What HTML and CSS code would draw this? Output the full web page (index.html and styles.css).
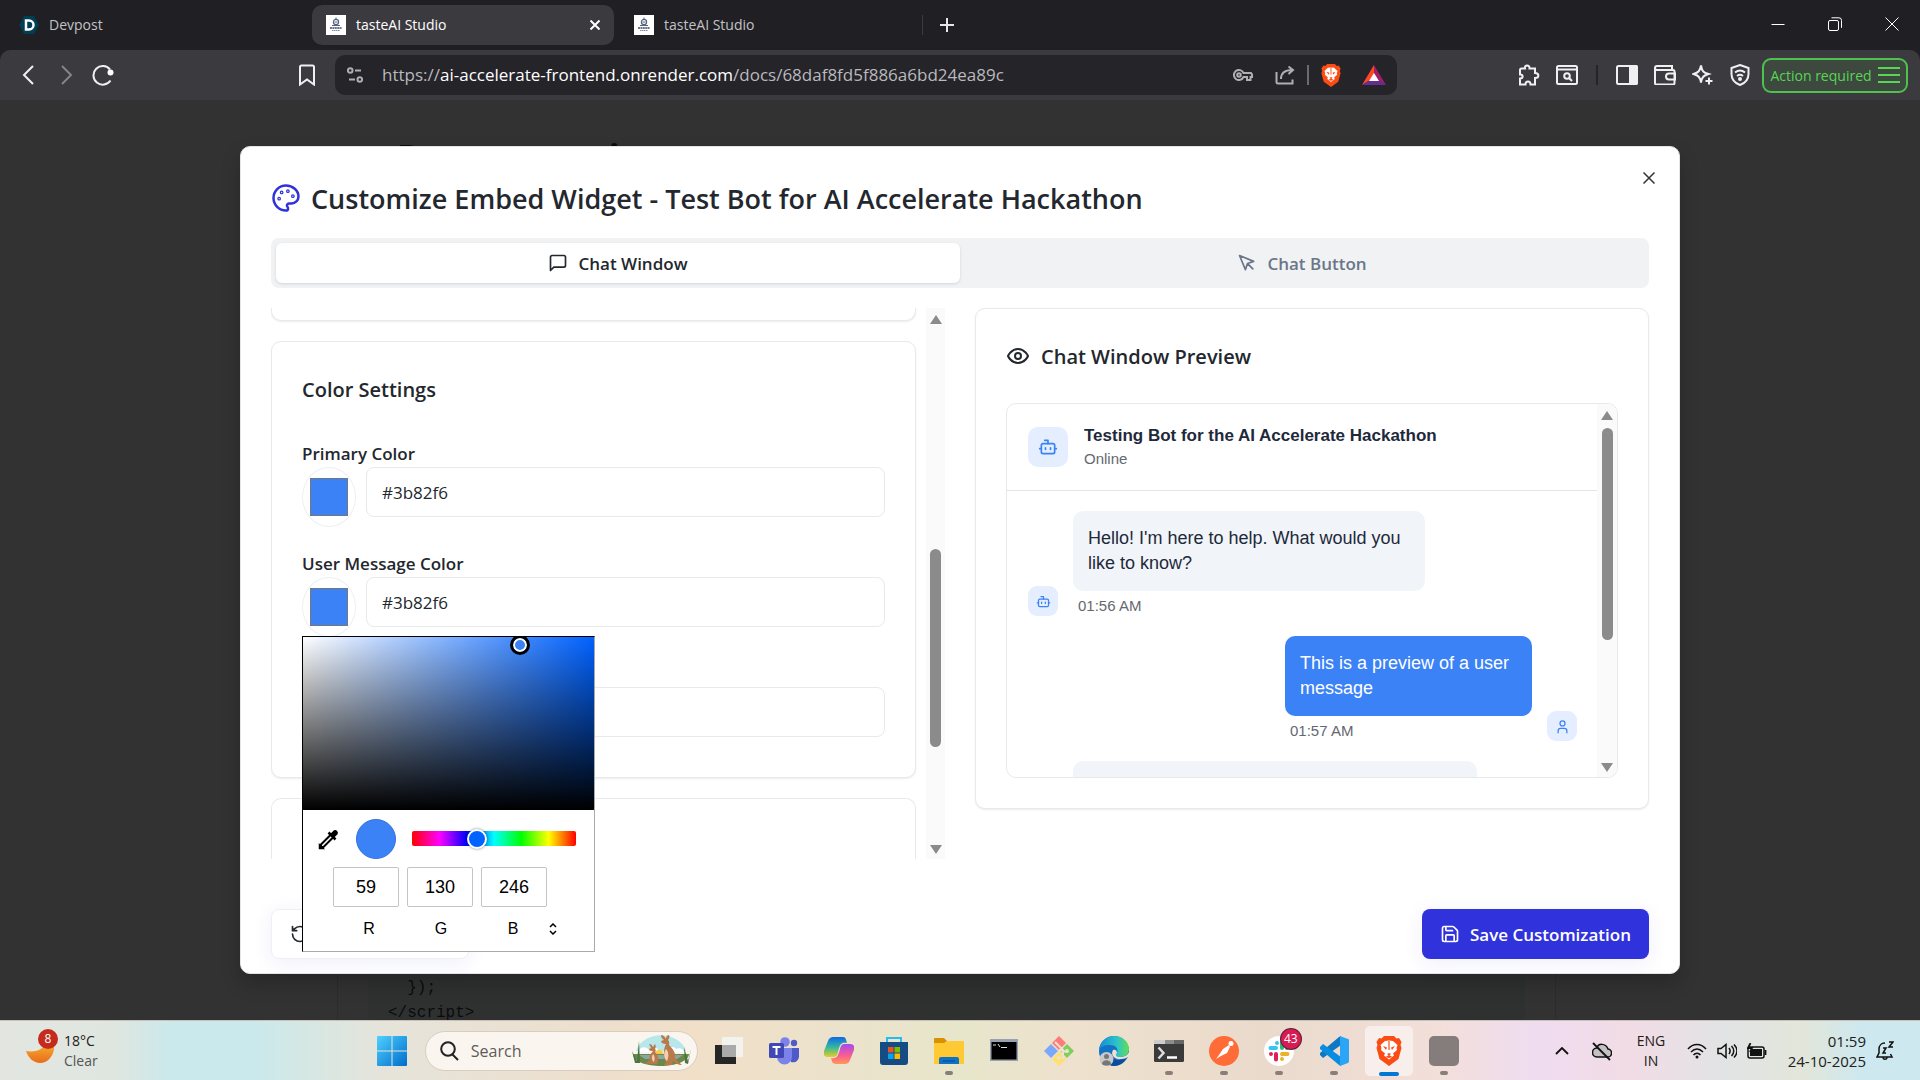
FILE: index.html
```html
<!DOCTYPE html>
<html lang="en">
<head>
    <meta charset="UTF-8">
    <meta name="viewport" content="width=device-width, initial-scale=1.0">
    <title>tasteAI Studio</title>
    <link rel="stylesheet" href="styles.css">
</head>
<body>
    <!-- shared icons -->
    <svg class="defs" width="0" height="0" aria-hidden="true">
        <symbol id="i-bot" viewBox="0 0 24 24"><path d="M12 8V4H8M2 14h2M20 14h2M15 13v2M9 13v2"/><rect x="4" y="8" width="16" height="12" rx="2"/></symbol>
        <symbol id="i-studio" viewBox="0 0 20 20"><path d="M0 0h20v20H0z" fill="#fff"/><circle cx="10" cy="7" r="2.6" fill="none" stroke="#56637c" stroke-width="1.2"/><path d="M10 2.500v2M8.500 7h3M6 10.500h8" stroke="#56637c"/><path d="M4 13h12" stroke="#3c4a68" stroke-width="1.600" stroke-dasharray="2 .4"/><path d="M6 15.500h8" stroke="#7f8aa0" stroke-width="1.200" stroke-dasharray="1.500 .5"/></symbol>
        <symbol id="i-lion" viewBox="0 0 26 30"><path d="M8 0h10l2.500 2.500L23 2l2.500 4-1 3 1 3-3 11-9.500 7-9.500-7-3-11 1-3-1-3L3 2l2.500.500z" fill="#fb4c14"/><path d="M13 4.500l4 .500 4.500 4-1 3 .5 2-4 3.500 1 2-5 4-5-4 1-2-4-3.500.500-2-1-3L9 5z" fill="#fff"/><path d="M7 10l4 1.500L10 14zM19 10l-4 1.500 1 2.500zM11 18l2-1 2 1-2 1.500zM12.400 5h1.200v9h-1.200zM9.500 21l3.500-2 3.500 2-3.500 1z" fill="#fb4c14"/></symbol>
    </svg>

    <header class="tabstrip">
        <a class="browser-tab" href="#">
            <svg width="20" height="20" viewBox="0 0 20 20"><path d="M5 1h10l5 9-5 9H5l-5-9z" fill="#003e54"/><path d="M7 5.500h3a4.500 4.500 0 0 1 0 9H7z" fill="none" stroke="#fff" stroke-width="2.500"/></svg>
            <span>Devpost</span>
        </a>
        <a class="browser-tab current" href="#">
            <svg width="20" height="20"><use href="#i-studio"/></svg>
            <span>tasteAI Studio</span>
            <svg class="tab-close" width="10" height="10" viewBox="0 0 10 10"><path d="M0.500.500l9 9M9.500.500l-9 9"/></svg>
        </a>
        <a class="browser-tab" href="#">
            <svg width="20" height="20"><use href="#i-studio"/></svg>
            <span>tasteAI Studio</span>
        </a>
        <button class="new-tab" aria-label="New tab"><svg width="14" height="14" viewBox="0 0 14 14"><path d="M7 0v14M0 7h14"/></svg></button>
        <div class="window-controls">
            <button aria-label="Minimize"><svg width="14" height="14" viewBox="0 0 14 14"><path d="M0.500 7.500h13"/></svg></button>
            <button aria-label="Restore"><svg width="14" height="14" viewBox="0 0 14 14"><rect x=".5" y="3.500" width="10" height="10" rx="1.500"/><path d="M3.500.800h7.500a2.500 2.500 0 0 1 2.500 2.500v7.500"/></svg></button>
            <button aria-label="Close window"><svg width="14" height="14" viewBox="0 0 14 14"><path d="M.5.500l13 13M13.500.500l-13 13"/></svg></button>
        </div>
    </header>

    <nav class="toolbar">
        <div class="nav-buttons">
            <button aria-label="Back"><svg width="20" height="20" viewBox="0 0 20 20"><path d="M14 1l-9 9 9 9"/></svg></button>
            <button class="dim" aria-label="Forward"><svg width="20" height="20" viewBox="0 0 20 20"><path d="M6 1l9 9-9 9"/></svg></button>
            <button aria-label="Reload"><svg width="22" height="22" viewBox="0 0 22 22"><path d="M18 5.500A9.300 9.300 0 1 0 18.500 16.500"/><circle cx="18.500" cy="8.500" r="3" fill="#fff" stroke="none"/></svg></button>
            <button class="bookmark" aria-label="Bookmark"><svg width="18" height="22" viewBox="0 0 18 22"><path d="M3.500 1.500h11a1.500 1.500 0 0 1 1.500 1.500v17.500l-7-5-7 5V3a1.500 1.500 0 0 1 1.500-1.500z"/></svg></button>
        </div>
        <div class="address">
            <svg class="site-info" width="16" height="16" viewBox="0 0 16 16"><circle cx="3.200" cy="3.500" r="2.300"/><path d="M8 3.500h6M2 12.500h6"/><circle cx="12.800" cy="12.500" r="2.300"/></svg>
            <span class="url">https://<b>ai-accelerate-frontend.onrender.com</b>/docs/68daf8fd5f886a6bd24ea89c</span>
            <svg class="key" width="20" height="14" viewBox="0 0 20 14"><path d="M10.500 5H18l1 1.500V9h-1.500v3H14V9h-3.500a5 5 0 1 1 0-4z"/><circle cx="6" cy="7" r="1.800"/></svg>
            <svg width="20" height="20" viewBox="0 0 20 20"><path d="M1.500 7v10a1.500 1.500 0 0 0 1.500 1.500h14.500v-4M6 14c0-6 4-9 11-9M13.500 1.500L18 5l-4.500 4"/></svg>
            <i class="bar"></i>
            <svg width="20" height="23" viewBox="0 0 26 30"><use href="#i-lion"/></svg>
            <svg class="bat" width="24" height="20" viewBox="0 0 24 20"><path d="M12 0L0 20l12-7z" fill="#ff4724"/><path d="M12 0l12 20-12-7z" fill="#9e1f63"/><path d="M0 20h24l-12-8z" fill="#662d91"/><path d="M12 8l5 8H7z" fill="#fff"/></svg>
        </div>
        <div class="extensions">
            <svg width="22" height="22" viewBox="0 0 22 22"><path d="M3.500 4.500H7c-1-4 5-4 4.500 0H17v4.500c4.500 0 4.500 5 0 5v6.500h-4.500c0-4-5-4-5 0H2v-6c3.500 0 3.500-4 0-4V6a1.500 1.500 0 0 1 1.500-1.500z"/></svg>
            <svg width="22" height="20" viewBox="0 0 22 20"><rect x="1" y="1" width="20" height="18" rx="1.500"/><path d="M1 4.500h20M13 13l3 3"/><circle cx="11" cy="11" r="2.800"/></svg>
            <i class="bar dark"></i>
            <svg width="22" height="20" viewBox="0 0 22 20"><rect x="1" y="1" width="20" height="18" rx="1.500"/><path d="M14 1h6a1 1 0 0 1 1 1v16a1 1 0 0 1-1 1h-6z" fill="#f0f0f2"/></svg>
            <svg width="22" height="20" viewBox="0 0 22 20"><path d="M18 4V1H3a2 2 0 0 0 0 4h16a1.500 1.500 0 0 1 1.500 1.500V18a1.500 1.500 0 0 1-1.500 1.500H2.500A1.500 1.500 0 0 1 1 18V3M21 8.500h-6a3 3 0 0 0 0 6h6z"/></svg>
            <svg width="22" height="22" viewBox="0 0 22 22"><path d="M9 1.500c1 6 2.500 7 7.500 8.500-5 1.500-6.500 3-7.500 8.500C8 13 6.500 11.500 1.500 10 6.500 8.500 8 7 9 1.500zM17 13.500v7M13.500 17h7"/></svg>
            <svg width="20" height="22" viewBox="0 0 20 22"><path d="M10 1l8.500 3v6c0 5-3 9-8.500 11C4.500 19 1.500 15 1.500 10V4zM5 8.500c3-2.500 7-2.500 10 0M7 12c2-1.600 4-1.600 6 0"/><circle cx="10" cy="15" r="1"/></svg>
            <button class="action">Action required <svg width="22" height="16" viewBox="0 0 22 16"><path d="M0 1h22M0 8h22M0 15h22"/></svg></button>
        </div>
    </nav>

    <div class="viewport">
        <div class="docs">
            <h1>Documentation</h1>
            <div class="docs-card">
                <pre class="code">  });
&lt;/script&gt;</pre>
            </div>
        </div>

        <main class="dialog" role="dialog" aria-labelledby="dialog-title">
            <button class="dialog-close" aria-label="Close"><svg width="12" height="12" viewBox="0 0 12 12"><path d="M.5.500l11 11M11.500.500l-11 11"/></svg></button>
            <h2 class="dialog-title" id="dialog-title">
                <svg class="line" width="30" height="30" viewBox="0 0 24 24"><circle cx="13.500" cy="6.500" r=".5"/><circle cx="17.500" cy="10.500" r=".5"/><circle cx="8.500" cy="7.500" r=".5"/><circle cx="6.500" cy="12.500" r=".5"/><path d="M12 2C6.500 2 2 6.500 2 12s4.500 10 10 10c.926 0 1.648-.746 1.648-1.688 0-.437-.18-.835-.437-1.125-.29-.289-.438-.652-.438-1.125a1.640 1.640 0 0 1 1.668-1.668h1.996c3.051 0 5.555-2.503 5.555-5.554C21.965 6.012 17.461 2 12 2z"/></svg>
                Customize Embed Widget - Test Bot for AI Accelerate Hackathon
            </h2>

            <div class="tabs" role="tablist">
                <button class="tab active" role="tab" aria-selected="true">
                    <svg class="line" width="20" height="20" viewBox="0 0 24 24"><path d="M21 15a2 2 0 0 1-2 2H7l-4 4V5a2 2 0 0 1 2-2h14a2 2 0 0 1 2 2z"/></svg>
                    Chat Window
                </button>
                <button class="tab" role="tab" aria-selected="false">
                    <svg class="line" width="20" height="20" viewBox="0 0 24 24"><path d="M3 3l7.070 16.970 2.510-7.390 7.390-2.510zM13 13l6 6"/></svg>
                    Chat Button
                </button>
            </div>

            <div class="panels">
                <div class="scroller">
                    <div class="settings">
                        <section class="card card-end"></section>
                        <section class="card">
                            <h3>Color Settings</h3>
                            <div class="field">
                                <label for="primary">Primary Color</label>
                                <div class="field-row">
                                    <input type="color" value="#3b82f6" aria-label="Primary color swatch">
                                    <input type="text" id="primary" value="#3b82f6">
                                </div>
                            </div>
                            <div class="field">
                                <label for="user">User Message Color</label>
                                <div class="field-row">
                                    <input type="color" value="#3b82f6" aria-label="User message swatch">
                                    <input type="text" id="user" value="#3b82f6">
                                </div>
                            </div>
                            <div class="field field-last">
                                <div class="field-row">
                                    <input type="color" value="#f1f5f9" aria-label="Bot message swatch">
                                    <input type="text" aria-label="Bot message color">
                                </div>
                            </div>
                        </section>
                        <section class="card card-start"></section>
                    </div>
                    <div class="scrollbar">
                        <i class="up"></i>
                        <i class="thumb"></i>
                        <i class="down"></i>
                    </div>
                </div>

                <section class="card preview">
                    <h3>
                        <svg class="line" width="24" height="24" viewBox="0 0 24 24"><path d="M2 12s3-7 10-7 10 7 10 7-3 7-10 7-10-7-10-7z"/><circle cx="12" cy="12" r="3"/></svg>
                        Chat Window Preview
                    </h3>
                    <div class="chat">
                        <div class="chat-body">
                            <div class="chat-header">
                                <span class="avatar"><svg class="line" width="20" height="20"><use href="#i-bot"/></svg></span>
                                <div>
                                    <strong>Testing Bot for the AI Accelerate Hackathon</strong>
                                    <small>Online</small>
                                </div>
                            </div>
                            <div class="messages">
                                <div class="message">
                                    <span class="avatar small"><svg class="line" width="15" height="15"><use href="#i-bot"/></svg></span>
                                    <div class="content">
                                        <p>Hello! I'm here to help. What would you like to know?</p>
                                        <time>01:56 AM</time>
                                    </div>
                                </div>
                                <div class="message from-user">
                                    <div class="content">
                                        <p>This is a preview of a user message</p>
                                        <time>01:57 AM</time>
                                    </div>
                                    <span class="avatar small"><svg class="line" width="15" height="15" viewBox="0 0 24 24"><circle cx="12" cy="7" r="4"/><path d="M5 22v-3a4 4 0 0 1 4-4h6a4 4 0 0 1 4 4v3"/></svg></span>
                                </div>
                                <div class="message next">
                                    <div class="content"><p></p></div>
                                </div>
                            </div>
                        </div>
                        <div class="scrollbar">
                            <i class="up"></i>
                            <i class="thumb"></i>
                            <i class="down"></i>
                        </div>
                    </div>
                </section>
            </div>

            <footer class="dialog-footer">
                <button class="btn reset" aria-label="Reset"><svg class="line" width="20" height="20" viewBox="0 0 24 24"><path d="M3 12a9 9 0 1 0 9-9 9.750 9.750 0 0 0-6.740 2.740L3 8M3 3v5h5"/></svg></button>
                <button class="btn save">
                    <svg class="line" width="20" height="20" viewBox="0 0 24 24"><path d="M15.200 3a2 2 0 0 1 1.400.600l3.800 3.800a2 2 0 0 1 .6 1.400V19a2 2 0 0 1-2 2H5a2 2 0 0 1-2-2V5a2 2 0 0 1 2-2zM17 21v-7a1 1 0 0 0-1-1H8a1 1 0 0 0-1 1v7M7 3v4a1 1 0 0 0 1 1h7"/></svg>
                    Save Customization
                </button>
            </footer>

            <div class="picker">
                <div class="shade"><i class="shade-handle"></i></div>
                <div class="picker-row">
                    <svg width="22" height="22" viewBox="0 0 22 22"><path d="M12.500 7L3 16.500V19h2.500L15 9.500" fill="none" stroke="#000" stroke-width="2"/><path d="M2 20v-2l2 2zM10.500 4.500l7 7M13 7l3.500-3.500a1.500 1.500 0 0 1 2 2L15 9z" fill="#000" stroke="#000" stroke-width="2.500"/></svg>
                    <i class="chosen"></i>
                    <div class="hue"><i class="hue-handle"></i></div>
                </div>
                <div class="channels">
                    <input id="red" type="text" value="59">
                    <input id="green" type="text" value="130">
                    <input id="blue" type="text" value="246">
                </div>
                <div class="channel-names">
                    <label for="red">R</label>
                    <label for="green">G</label>
                    <label for="blue">B</label>
                    <svg width="8" height="12" viewBox="0 0 8 12"><path d="M1 4l3-3 3 3M1 8l3 3 3-3"/></svg>
                </div>
            </div>
        </main>
    </div>

    <footer class="taskbar">
        <div class="weather">
            <div class="moon">
                <svg width="28" height="28" viewBox="0 0 28 28"><defs><linearGradient id="moon" x2="0" y2="1"><stop stop-color="#f8c135"/><stop offset="1" stop-color="#ea6a1b"/></linearGradient></defs><path d="M27 4c4 10-3 22-13 22C8 26 2 21 0 14c10 2 20-2 21-12z" fill="url(#moon)"/></svg>
                <span class="badge">8</span>
            </div>
            <div class="weather-text">18°C<span>Clear</span></div>
        </div>

        <div class="apps">
            <a class="app" href="#" aria-label="Start"><svg width="30" height="30" viewBox="0 0 30 30"><defs><linearGradient id="win" x2="1" y2="1"><stop stop-color="#4fd0ff"/><stop offset="1" stop-color="#006dcc"/></linearGradient></defs><path d="M1 0h13.500v14.500H0V1a1 1 0 0 1 1-1zM15.500 0H29a1 1 0 0 1 1 1v13.500H15.500zM0 15.500h14.500V30H1a1 1 0 0 1-1-1zM15.500 15.500H30V29a1 1 0 0 1-1 1H15.500z" fill="url(#win)"/></svg></a>
            <label class="search">
                <svg width="20" height="20" viewBox="0 0 20 20"><circle cx="9" cy="8" r="6.800"/><path d="M13.500 13.500L19 19"/></svg>
                <input type="text" placeholder="Search">
                <svg class="scene" width="60" height="32" viewBox="0 0 60 32"><path d="M5 16C12-5 48-5 55 16z" fill="#b7e7ea"/><path d="M7 17c3-7 9-5 11-2 3-4 9-4 10 2zM35 17c0-6 9-6 10-3 4-2 7 0 8 3z" fill="#fff"/><circle cx="28" cy="19" r="4" fill="#ffc83d"/><path d="M2 19h56c0 7-14 12-28 12S2 27 2 19z" fill="#69884a"/><path d="M8 20h44l-6 4H14z" fill="#8aa7a0"/><path d="M4 28L1 16l5 10 2-20 1 22zM54 28l-1-16 4 14 3-12-3 15z" fill="#4c7440"/><g fill="#b9794b"><path d="M35 9c-3 0-5-1-5-3l3-1c-2-1-3-3-3-5 2 0 4 2 5 4 0-2 1-4 3-4 1 2 0 4-1 5 2 2 1 4 1 5 4 4 7 8 6 13 2 3 5 5 7 7-4 0-7-2-9-4l-1 4h-8l2-3c-3-4-3-12 0-18z"/><path d="M22 16c-2 0-4 0-4-2l2-1-2-4c2 0 3 1 4 3l2-3c1 2 1 3 0 5 1 1 1 2 0 3 4 4 4 8 2 12h-8l2-2c-3-2-1-8 2-11zM20 28c-3 1-6 1-8 0 3 0 5-1 6-3z"/></g><path d="M35 14c3 3 3 8 1 12-3-2-4-8-1-12zM22 19c2 2 2 5 1 8-2-1-3-5-1-8z" fill="#f1d0b0"/></svg>
            </label>
            <a class="app" href="#" aria-label="Task view"><svg width="30" height="30" viewBox="0 0 30 30"><path d="M1 9h21v19H1z" fill="#262626"/><path d="M8 1h21v20H8z" fill="#f5f5f5" opacity=".85"/><path d="M8 9h14v12H8z" fill="#aaa"/></svg></a>
            <a class="app" href="#" aria-label="Teams"><svg width="30" height="30" viewBox="0 0 30 30"><circle cx="16" cy="6" r="4.800" fill="#7b83eb"/><circle cx="25" cy="7" r="3.200" fill="#5059c9"/><path d="M19 12h11v8a6 6 0 0 1-8 6z" fill="#5059c9"/><path d="M8 12h15v9a7.500 7.500 0 0 1-15 0z" fill="#7b83eb"/><rect x="0" y="7" width="15" height="15" rx="1.500" fill="#4048b5"/><path d="M3.500 11h8M7.500 11v8" stroke="#fff" stroke-width="2"/></svg></a>
            <a class="app" href="#" aria-label="Copilot"><svg width="30" height="30" viewBox="0 0 30 30"><defs><linearGradient id="cp1" x2="0" y2="1"><stop stop-color="#1267e8"/><stop offset=".5" stop-color="#2fb8a0"/><stop offset="1" stop-color="#e5cf20"/></linearGradient><linearGradient id="cp2" x2="0" y2="1"><stop stop-color="#a44af0"/><stop offset=".6" stop-color="#fa5f8d"/><stop offset="1" stop-color="#ff9a55"/></linearGradient></defs><path d="M9 1h10c3 0 3 3 4 6-6-1-7 1-9 9-1 4-2 5-5 5H4c-4 0-5-3-4-6L4 5c1-3 3-4 5-4z" fill="url(#cp1)"/><path d="M21 28H12c-4 0-4-3-5-6 6 1 7-2 9-9 1-4 2-5 5-5h5c4 0 5 3 4 6l-4 10c-1 3-3 4-5 4z" fill="url(#cp2)"/></svg></a>
            <a class="app" href="#" aria-label="Store"><svg width="30" height="30" viewBox="0 0 30 30"><path d="M8 7V2h14v5" fill="none" stroke="#21bdf5" stroke-width="2"/><path d="M1 6h28v20a3 3 0 0 1-3 3H4a3 3 0 0 1-3-3z" fill="#154c83"/><path d="M9 11h5.500v5.500H9z" fill="#f25022"/><path d="M15.500 11H21v5.500h-5.500z" fill="#7fba00"/><path d="M9 17.500h5.500V23H9z" fill="#00a4ef"/><path d="M15.500 17.500H21V23h-5.500z" fill="#ffb900"/></svg></a>
            <a class="app running" href="#" aria-label="Files"><svg width="30" height="30" viewBox="0 0 30 30"><path d="M0 7V3a1 1 0 0 1 1-1h9l3 3-3 3z" fill="#d99100"/><path d="M0 7h10l3-2h16a1 1 0 0 1 1 1v22H0z" fill="#ffc933"/><path d="M5 28v-5a2 2 0 0 1 2-2h16a2 2 0 0 1 2 2v5z" fill="#0f72c4"/><path d="M9 25h12" stroke="#054b8c"/></svg></a>
            <a class="app" href="#" aria-label="Command prompt"><svg width="28" height="30" viewBox="0 0 28 30"><path d="M0 3h28v22H0z" fill="#98a2b0"/><path d="M1.500 6h25v17.500h-25z" fill="#000"/><path d="M3 9h3M8 8l2 3M11 11.500h6" stroke="#ddd"/></svg></a>
            <a class="app" href="#" aria-label="Git"><svg width="30" height="30" viewBox="0 0 30 30"><path d="M15 0l7 7-7 7-7-7z" fill="#ff7b7b"/><path d="M23 8l7 7-7 7-7-7z" fill="#7ed05b"/><path d="M7 8l7 7-7 7-7-7z" fill="#7aa9fb"/><path d="M15 16l7 7-7 7-7-7z" fill="#ffdf6f"/><path d="M11 6l8 8v9M15 14l8 2" stroke="#eee1ce" stroke-width="2" fill="none"/><circle cx="23" cy="15" r="2" fill="#eee1ce"/><circle cx="15" cy="22" r="2" fill="#eee1ce"/></svg></a>
            <a class="app" href="#" aria-label="Edge"><svg width="30" height="30" viewBox="0 0 30 30"><defs><linearGradient id="edge"><stop stop-color="#138bd8"/><stop offset=".6" stop-color="#2ec3c9"/><stop offset="1" stop-color="#60e052"/></linearGradient></defs><circle cx="15" cy="15" r="15" fill="#1272c6"/><path d="M0 14C1 5 8 0 15 0c9 0 15 6 15 13 0 5-4 8-9 8-4 0-5-2-3-4 2-5-2-8-7-8-6 0-10 2-11 5z" fill="url(#edge)"/><path d="M12 18c1 7 9 8 16 3-3 6-8 9-13 9s-9-5-8-11z" fill="#0c4b9c"/><path d="M14 14c-3 5 2 10 8 9 4 0 6-1 8-3v-4c-1 3-5 5-9 5-4 0-5-2-3-4 0-3-2-4-4-3z" fill="#efdfce"/><circle cx="7.500" cy="23" r="7" fill="#c9c9c9"/><circle cx="7.500" cy="20.500" r="2.500" fill="#777"/><path d="M3 28c0-5 9-5 9 0-2 2-7 2-9 0z" fill="#777"/></svg></a>
            <a class="app running" href="#" aria-label="Terminal"><svg width="30" height="30" viewBox="0 0 30 30"><rect y="4" width="30" height="22" rx="1.500" fill="#3a3a3a"/><path d="M0 4h11v4H0z" fill="#ccc"/><path d="M11 4h9v4h-9z" fill="#8d8d8d"/><path d="M20 4h10v4H20z" fill="#666"/><path d="M4.500 11.500l5 5.500-5 5.500" fill="none" stroke="#ddd" stroke-width="2.500"/><path d="M13 21.500h10" stroke="#fff" stroke-width="2.500"/></svg></a>
            <a class="app running" href="#" aria-label="Postman"><svg width="30" height="30" viewBox="0 0 30 30"><circle cx="15" cy="15" r="15" fill="#ff6c37"/><circle cx="22" cy="7.500" r="2.500" fill="#fff"/><path d="M20 9l-6 4-4 6-3 4 5-3 6-3 3-6z" fill="#fff"/></svg></a>
            <a class="app running" href="#" aria-label="Slack">
                <svg width="30" height="30" viewBox="0 0 30 30"><circle cx="15" cy="15" r="15" fill="#fff"/><g stroke-width="4" stroke-linecap="round" fill="none"><path d="M13 7v0M6.500 12H12" stroke="#36c5f0"/><path d="M18 6.500V12M23 12v0" stroke="#2eb67d"/><path d="M18 18h5.500M18 23v0" stroke="#ecb22e"/><path d="M12 18v5.500M7 18v0" stroke="#e01e5a"/></g></svg>
                <span class="badge">43</span>
            </a>
            <a class="app running" href="#" aria-label="Code"><svg width="30" height="30" viewBox="0 0 30 30"><path d="M22 0v9L4 22l-3-3v-2L20 1z" fill="#0c79c4"/><path d="M22 30v-9L4 8l-3 3v2l19 16z" fill="#0a8de0"/><path d="M21 0l8 3a1 1 0 0 1 1 1v22l-1 1-8 3z" fill="#2ba5f5"/></svg></a>
            <a class="app open" href="#" aria-label="Brave"><svg width="26" height="30" viewBox="0 0 26 30"><use href="#i-lion"/></svg></a>
            <a class="app running" href="#" aria-label="App"><svg width="30" height="30"><rect width="30" height="30" rx="5" fill="#857d7b"/></svg></a>
        </div>

        <div class="tray">
            <svg class="chevron" width="14" height="8" viewBox="0 0 14 8"><path d="M1 7l6-6 6 6" stroke-width="1.800"/></svg>
            <svg class="cloud" width="20" height="20" viewBox="0 0 20 20"><path d="M5 16h10a4 4 0 0 0 1-8C14 2 6 2 5 7c-6 0-6 9 0 9z" fill="#c4c0c4"/><path d="M1 2l17 17" stroke-width="1.800"/></svg>
            <div class="lang">ENG<br>IN</div>
            <svg class="status" width="20" height="16" viewBox="0 0 20 16"><path d="M1 6c5-6 13-6 18 0M4 9c4-4 8-4 12 0M6.500 12c2-2.500 5-2.500 7 0"/><circle cx="10" cy="14" r="1.500" fill="#111" stroke="none"/></svg>
            <svg class="status" width="20" height="16" viewBox="0 0 20 16"><path d="M1 5.500h3l5-4v13l-5-4H1zM12 5c1.500 2 1.500 4 0 6M14.500 3c3 3 3 7 0 10M17 1.500c4 4 4 9 0 13"/></svg>
            <svg class="status" width="20" height="16" viewBox="0 0 20 16"><rect x="1" y="4" width="16" height="11" rx="2"/><path d="M5 6h10v7H3V9z" fill="#111" stroke="none"/><path d="M18.500 7v5M3.500 0L1 5h4L3 9" stroke-width="1.800"/></svg>
            <div class="clock">01:59<br>24-10-2025</div>
            <svg width="18" height="20" viewBox="0 0 18 20"><path d="M9 2C5 2 3 5 3 8v4l-2 4h15l-1.500-3M7 16c0 3 4 3 4 0M7 7h3l-3 5h3M13 1h4l-4 5h4"/></svg>
        </div>
    </footer>
</body>
</html>
```

FILE: styles.css
```css
* {
    box-sizing: border-box;
}

body {
    margin: 0;
    height: 100vh;
    display: flex;
    flex-direction: column;
    overflow: hidden;
    font-family: "Open Sans", "Noto Sans", sans-serif;
    font-size: 17px;
    color: #23272e;
    background: #201f24;
}

button,
input {
    font: inherit;
    color: inherit;
}

button {
    padding: 0;
    border: 0;
    background: none;
}

a {
    color: inherit;
    text-decoration: none;
}

svg {
    flex: none;
}

.defs {
    position: absolute;
}

/* lucide style outline icons */
.line {
    fill: none;
    stroke: currentColor;
    stroke-width: 2;
    stroke-linecap: round;
    stroke-linejoin: round;
}

/* browser tabs */
.tabstrip {
    height: 50px;
    flex: none;
    display: flex;
    align-items: center;
    padding-left: 5px;
    color: #c3c3c6;
    font-size: 14px;
}

.browser-tab {
    width: 302px;
    height: 40px;
    padding: 0 14px;
    display: flex;
    align-items: center;
    gap: 10px;
    border-radius: 10px;
    line-height: 18px;
}

.browser-tab:last-of-type {
    margin-left: 6px;
}

.browser-tab.current {
    margin-left: 5px;
    background: #3b3a3f;
    color: #fff;
}

.tab-close {
    margin-left: auto;
    stroke: #fff;
    stroke-width: 2;
}

.new-tab {
    width: 48px;
    height: 20px;
    display: grid;
    place-items: center;
    border-left: 1px solid #3b3a3f;
    stroke: #e6e6e8;
    stroke-width: 2;
}

.window-controls {
    margin-left: auto;
    display: flex;
    fill: none;
    stroke: #fff;
}

.window-controls button {
    width: 57px;
    height: 50px;
}

/* toolbar */
.toolbar {
    height: 50px;
    flex: none;
    display: flex;
    align-items: center;
    border-radius: 10px 10px 0 0;
    background: #3b3a3f;
    fill: none;
    stroke: #f0f0f2;
    stroke-width: 2;
}

.nav-buttons {
    width: 335px;
    padding: 0 10px;
    display: flex;
}

.nav-buttons button {
    width: 37px;
    height: 40px;
    display: grid;
    place-items: center;
}

.nav-buttons .dim {
    stroke: #85848a;
}

.nav-buttons .bookmark {
    margin-left: auto;
}

.address {
    flex: 1;
    height: 40px;
    padding: 0 11px 0 12px;
    display: flex;
    align-items: center;
    gap: 12px;
    border-radius: 10px;
    background: #252429;
    stroke: #aeaeb3;
}

.url {
    flex: 1;
    margin-left: 7px;
    color: #b9b9be;
    line-height: 20px;
    white-space: nowrap;
}

.url b {
    font-weight: 400;
    color: #fff;
}

.key {
    margin-right: 10px;
}

.address svg use,
.address .bat {
    stroke: none;
}

.address .bat {
    margin-left: 9px;
}

.bar {
    width: 2px;
    height: 20px;
    background: #6b6a70;
}

.bar.dark {
    margin: 0 2px;
    background: #252429;
}

.extensions {
    width: 523px;
    padding-right: 12px;
    display: flex;
    align-items: center;
    justify-content: flex-end;
    gap: 16px;
}

.action {
    width: 146px;
    height: 35px;
    margin-left: -4px;
    display: flex;
    align-items: center;
    justify-content: center;
    gap: 6px;
    border: 2px solid #4fc14d;
    border-radius: 9px;
    background: #3d483f;
    color: #58d554;
    stroke: #58d554;
    font-size: 14px;
    white-space: nowrap;
}

/* dimmed page behind the dialog */
.viewport {
    flex: 1;
    min-height: 0;
    position: relative;
    display: grid;
    place-items: center;
    overflow: hidden;
    background: #323232;
}

.docs {
    position: absolute;
    inset: 0 0 -6px;
    padding: 31px 364px 0 337px;
    display: flex;
    flex-direction: column;
    color: #0a0b0c;
}

.docs h1 {
    margin: 0 0 0 60px;
    font-size: 34px;
    line-height: 50px;
}

.docs-card {
    flex: 1;
    padding: 0 30px;
    display: flex;
    border: 1px solid #2c2c2c;
    border-width: 0 1px;
}

.code {
    flex: 1;
    margin: 0;
    padding: 0 20px;
    display: flex;
    align-items: flex-end;
    background: #2f3131;
    font: 16px/25px "Liberation Mono", monospace;
}

/* dialog */
.dialog {
    position: relative;
    width: 75%;
    height: calc(100% - 92px);
    padding: 30px 30px 14px;
    display: flex;
    flex-direction: column;
    border: 1px solid #e4e4e7;
    border-radius: 10px;
    background: #fff;
    box-shadow: 0 10px 20px rgba(0, 0, 0, .2);
}

.dialog-close {
    position: absolute;
    top: 19px;
    right: 18px;
    width: 24px;
    height: 24px;
    display: grid;
    place-items: center;
    stroke: #333;
    stroke-width: 1.5;
}

.dialog-title {
    height: 42px;
    margin: 0 0 19px;
    display: flex;
    align-items: center;
    gap: 10px;
    font-size: 27px;
    font-weight: 600;
}

.dialog-title svg {
    color: #3032dc;
}

.tabs {
    height: 50px;
    padding: 5px;
    display: flex;
    border-radius: 8px;
    background: #f1f2f4;
}

.tab {
    flex: 1;
    display: flex;
    align-items: center;
    justify-content: center;
    gap: 10px;
    border-radius: 6px;
    color: #6a7688;
    font-weight: 600;
}

.tab.active {
    background: #fff;
    color: #23272e;
    box-shadow: 0 1px 3px rgba(0, 0, 0, .12);
}

.panels {
    flex: 1;
    min-height: 0;
    margin: 20px 0 50px;
    display: grid;
    grid-template-columns: 1fr 1fr;
    gap: 30px;
    align-items: start;
}

.card {
    padding: 30px;
    border: 1px solid #e8e9ec;
    border-radius: 10px;
    background: #fff;
    box-shadow: 0 1px 2px rgba(0, 0, 0, .08);
}

.card h3 {
    height: 34px;
    margin: 0 0 30px;
    display: flex;
    align-items: center;
    gap: 11px;
    font-size: 20px;
    font-weight: 600;
}

.scroller {
    height: 100%;
    display: flex;
    gap: 10px;
    overflow: hidden;
}

.settings {
    flex: 1;
    display: flex;
    flex-direction: column;
    gap: 20px;
}

.card-end {
    height: 14px;
    padding: 0;
    border-top: 0;
    border-radius: 0 0 10px 10px;
}

.settings h3 {
    margin-bottom: 36px;
}

.card-start {
    flex: 1;
    border-bottom: 0;
    border-radius: 10px 10px 0 0;
    box-shadow: none;
}

.scrollbar {
    width: 19px;
    padding: 7px 0 5px;
    display: flex;
    flex-direction: column;
    align-items: center;
    background: #fafafa;
}

.scrollbar .up,
.scrollbar .down {
    border: 6px solid transparent;
    border-top-width: 0;
    border-bottom: 9px solid #8b8b8b;
}

.scrollbar .down {
    margin-top: auto;
    border-bottom-width: 0;
    border-top: 9px solid #8b8b8b;
}

.thumb {
    width: 11px;
    height: 198px;
    margin-top: 225px;
    border-radius: 6px;
    background: #8b8b8b;
}

.field {
    margin-bottom: 25px;
}

.field label {
    height: 25px;
    display: block;
    line-height: 24px;
    font-weight: 600;
}

.field-last {
    margin-bottom: 0;
    padding-top: 25px;
}

.field-row {
    display: flex;
    gap: 10px;
}

.field input[type="color"] {
    width: 54px;
    height: 60px;
    padding: 10px 7px;
    border: 1px solid #eeeff1;
    border-radius: 50%;
    background: #fff;
}

.field input[type="color"]::-webkit-color-swatch-wrapper {
    padding: 0;
}

.field input[type="color"]::-webkit-color-swatch {
    border: 1px solid #777;
    border-radius: 0;
}

.field input[type="text"] {
    flex: 1;
    min-width: 0;
    height: 50px;
    padding: 0 15px;
    border: 1px solid #e8e9ec;
    border-radius: 8px;
}

/* preview */
.chat {
    height: 375px;
    display: flex;
    border: 1px solid #e8e9ec;
    border-radius: 10px;
    overflow: hidden;
    font-family: "Liberation Sans", sans-serif;
    font-size: 18px;
    color: #1e293b;
}

.chat-body {
    flex: 1;
}

.chat .scrollbar {
    width: 20px;
}

.chat .thumb {
    height: 212px;
    margin-top: 8px;
}

.chat-header {
    height: 87px;
    padding: 0 21px;
    display: flex;
    align-items: center;
    gap: 16px;
    border-bottom: 1px solid #e2e4e8;
}

.chat-header strong,
.chat-header small {
    display: block;
    line-height: 23px;
}

.chat-header strong {
    font-size: 17px;
}

.chat small,
.chat time {
    color: #64686f;
    font-size: 15px;
}

.avatar {
    width: 40px;
    height: 40px;
    flex: none;
    display: grid;
    place-items: center;
    border-radius: 10px;
    background: #e4eefe;
    color: #3b82f6;
}

.avatar.small {
    width: 30px;
    height: 30px;
    border-radius: 9px;
}

.messages {
    padding: 20px 20px 20px 21px;
    display: flex;
    flex-direction: column;
    gap: 20px;
}

.message {
    display: flex;
    align-items: flex-end;
    gap: 15px;
}

.content {
    max-width: 352px;
}

.content p {
    margin: 0;
    padding: 15px;
    border-radius: 10px;
    background: #f1f5f9;
    line-height: 25px;
}

.content time {
    display: block;
    margin-top: 5px;
    padding-left: 5px;
    line-height: 20px;
}

.from-user {
    align-self: flex-end;
}

.from-user .content {
    max-width: 247px;
}

.from-user p {
    background: #3b82f6;
    color: #fff;
}

.next {
    padding-left: 45px;
}

.next .content {
    width: 404px;
    max-width: none;
}

/* footer buttons */
.dialog-footer {
    display: flex;
    justify-content: space-between;
}

.btn {
    height: 50px;
    padding: 0 18px;
    display: flex;
    align-items: center;
    gap: 10px;
    border-radius: 8px;
    font-weight: 600;
    box-shadow: 0 4px 20px rgba(48, 50, 220, .08);
}

.reset {
    width: 198px;
    border: 1px solid #eeeff1;
}

.save {
    background: #3032dc;
    color: #fff;
}

/* colour picker popup, opens under the swatch */
.picker {
    position: absolute;
    left: 61px;
    top: 489px;
    width: 293px;
    height: 316px;
    border: 1px solid #aaa;
    border-top-color: #000;
    border-left-color: #000;
    background: #fff;
    color: #000;
    font-family: "Liberation Sans", sans-serif;
}

.shade {
    position: relative;
    height: 173px;
    background: linear-gradient(to top, #000, transparent), linear-gradient(to right, #fff, #0062ff);
    overflow: hidden;
}

.shade-handle,
.hue-handle {
    position: absolute;
    width: 20px;
    height: 20px;
    border-radius: 50%;
}

.shade-handle {
    left: 207px;
    top: -2px;
    border: 3px solid #000;
    background: #3b82f6;
    box-shadow: inset 0 0 0 2px #fff;
}

.picker-row {
    height: 57px;
    padding: 8px 18px 8px 15px;
    display: flex;
    align-items: center;
    gap: 16px;
}

.chosen {
    width: 40px;
    height: 40px;
    border: 1px solid #3474dc;
    border-radius: 50%;
    background: #3b82f6;
}

.hue {
    position: relative;
    flex: 1;
    height: 15px;
    border-radius: 2px;
    background: linear-gradient(to left, #f00, #ff0, #0f0, #0ff, #00f, #f0f, #f00);
}

.hue-handle {
    left: 55px;
    top: -2px;
    border: 2px solid #fff;
    background: #0062ff;
    box-shadow: 0 0 3px rgba(0, 0, 0, .5);
}

.channels {
    padding-left: 30px;
    display: flex;
    gap: 8px;
}

.channels input {
    width: 66px;
    height: 40px;
    padding: 0;
    border: 1px solid #c4c4c4;
    border-radius: 2px;
    text-align: center;
    font-size: 18px;
}

.channel-names {
    height: 44px;
    padding-left: 30px;
    display: flex;
    align-items: center;
}

.channel-names label {
    width: 72px;
    text-align: center;
    font-size: 16px;
}

.channel-names svg {
    fill: none;
    stroke: #000;
    stroke-width: 1.5;
}

/* taskbar */
.taskbar {
    height: 60px;
    flex: none;
    display: flex;
    align-items: center;
    border-top: 1px solid #c9c0b9;
    background: linear-gradient(to right, #e3e6e0 0, #dfe6e0 6%, #c9e9ec 9%, #c9e9ec 13%, #e6e4da 20%, #eddfcd 31%, #f1dfc8 36%, #ece2cb 43%, #e7e6cb 50%, #eee1cd 56%, #eadacc 66%, #f3dfda 75%, #efdcf0 80%, #f1dce5 85%, #e1e4e4 90%, #e2e6da 94%, #cde8ef 97%);
    color: #202020;
    font-size: 14px;
    line-height: 20px;
}

.weather {
    width: 19%;
    padding-left: 26px;
    display: flex;
    gap: 10px;
}

.moon {
    position: relative;
    padding-top: 6px;
}

.badge {
    position: absolute;
    width: 20px;
    height: 20px;
    border-radius: 50%;
    background: #c42b1c;
    color: #fff;
    font-size: 12px;
    text-align: center;
}

.moon .badge {
    left: 12px;
    top: -2px;
}

.weather-text span {
    display: block;
    color: #555;
}

.apps {
    display: flex;
    align-items: center;
}

.app {
    position: relative;
    width: 55px;
    height: 50px;
    display: grid;
    place-items: center;
}

.app .badge {
    right: 6px;
    top: 3px;
    background: #d61b55;
    box-shadow: 0 0 0 1px #5e2136;
}

.search {
    width: 273px;
    height: 40px;
    margin: 0 4px 0 5px;
    padding: 0 6px 0 13px;
    display: flex;
    align-items: center;
    gap: 12px;
    border: 1px solid #d9cdbf;
    border-radius: 20px;
    background: #faf5ef;
    fill: none;
    stroke: #222;
    stroke-width: 2;
}

.search input {
    flex: 1;
    min-width: 0;
    padding: 0;
    border: 0;
    background: none;
    font-size: 16px;
}

.search input::placeholder {
    color: #5c5c5c;
}

.scene {
    stroke: none;
}

.running::after,
.open::after {
    content: "";
    position: absolute;
    bottom: 1px;
    left: calc(50% - 4px);
    width: 8px;
    height: 4px;
    border-radius: 2px;
    background: #877f78;
}

.open {
    width: 48px;
    margin: 0 4px 0 3px;
    border-radius: 5px;
    background: #f8efec;
}

.open::after {
    bottom: 0;
    left: calc(50% - 10px);
    width: 20px;
    background: #0078d4;
}

.tray {
    margin-left: auto;
    padding-right: 26px;
    display: flex;
    align-items: center;
    fill: none;
    stroke: #111;
    stroke-width: 1.5;
    text-align: center;
}

.chevron {
    margin: 0 13px;
}

.cloud {
    margin: 0 8px 0 10px;
}

.lang {
    width: 62px;
}

.status {
    margin: 0 5px;
}

.clock {
    width: 94px;
    margin-right: 10px;
    font-size: 15px;
    text-align: right;
}
```
